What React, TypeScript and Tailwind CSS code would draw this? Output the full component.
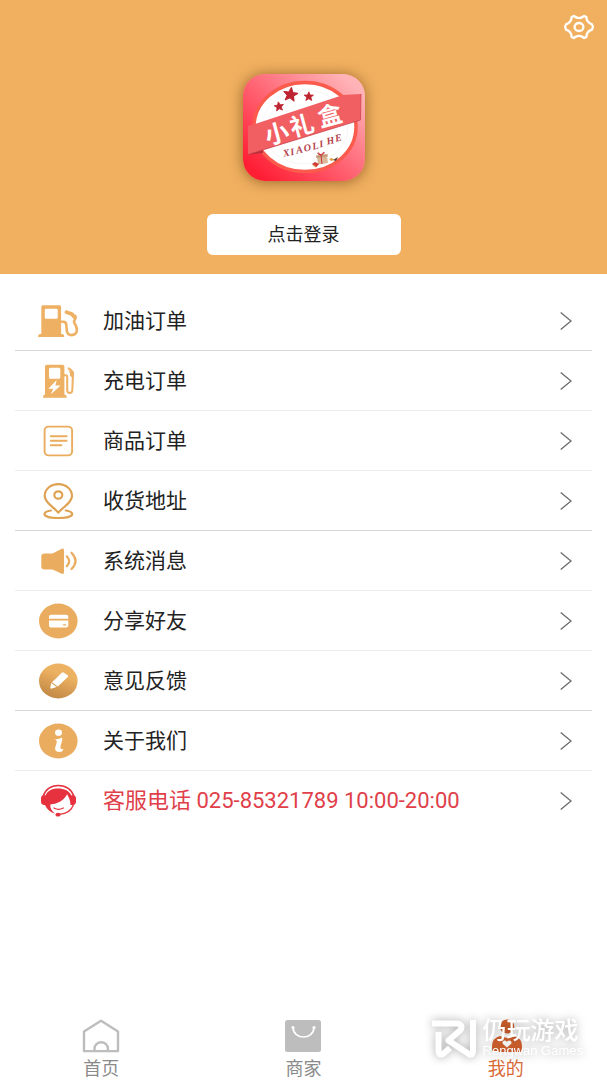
import type { ReactNode } from 'react';

interface MenuItem {
  label: string;
  icon: ReactNode;
  highlight?: boolean;
  strongLine?: boolean;
}

interface TabItem {
  label: string;
  icon: ReactNode;
  active?: boolean;
}

const ORANGE = '#eaac5e';

function MenuIcon({ children }: { children: ReactNode }) {
  return (
    <svg viewBox="0 0 42 38" className="h-[38px] w-[42px] shrink-0" fill="none" aria-hidden="true">
      {children}
    </svg>
  );
}

function FuelIcon() {
  return (
    <MenuIcon>
      <path
        fill="#eeb062"
        fillRule="evenodd"
        d="M6 3.300h16.500a1.600 1.600 0 0 1 1.600 1.600V32h1.600q1.600.4 1.600 3H1q0-2.600 1.700-3h1.600V4.900A1.600 1.600 0 0 1 6 3.300ZM9 6.700q-1.200 0-1.200 1.200v7.700q0 1.200 1.200 1.200h10.500q1.200 0 1.200-1.200V7.900q0-1.200-1.200-1.200Z"
      />
      <path
        stroke="#eeb062"
        strokeWidth="2.600"
        strokeLinecap="round"
        d="M24 19.800h2.500q2.500 0 2.800 3l.5 6q.6 4.300 5 4.300 5.500-.5 5-6-.3-3-2.600-6.300-.6-1.800.8-3.600.9-1.500.4-3"
      />
      <path
        stroke="#eeb062"
        strokeWidth="3.800"
        strokeLinecap="round"
        strokeLinejoin="round"
        d="M29.500 10.300l5.300 1.700 2.800 3.200"
      />
    </MenuIcon>
  );
}

function ChargeIcon() {
  return (
    <MenuIcon>
      <path
        fill="#eeb062"
        fillRule="evenodd"
        d="M10 2.700h15.600a1.800 1.800 0 0 1 1.800 1.800v28.300h1q1.300.2 1.300 2.900H6q0-2.700 1.400-2.900H8V4.500a1.800 1.800 0 0 1 2-1.800ZM13.500 5.700q-1.500 0-1.500 1.500v8q0 1.500 1.500 1.500h8.300q1.500 0 1.500-1.500v-8q0-1.500-1.500-1.500ZM19.700 18l-8.400 8.800h4.900L14 32.300l9.600-8.800h-5.200Z"
      />
      <path
        stroke="#eeb062"
        strokeWidth="2"
        strokeLinecap="round"
        d="M27.300 13.200h1.400q1.500 0 1.500 1.600v13.500q0 2.700 2.500 2.700t2.600-2.700l.7-17.300q-.4-2.200-4.400-4.700"
      />
      <path fill="#eeb062" d="M31.300 8.600l2 .6 3.200 1.800-.3 5-3.300-2.200.2-2.600Z" />
    </MenuIcon>
  );
}

function OrderIcon() {
  return (
    <MenuIcon>
      <rect x="7.600" y="4.600" width="27.500" height="28.800" rx="4" stroke={ORANGE} strokeWidth="1.900" />
      <path stroke={ORANGE} strokeWidth="1.900" strokeLinecap="round" d="M13.800 14.300h15.800M13.800 18.800h15.800M13.800 23.200h10.600" />
    </MenuIcon>
  );
}

function AddressIcon() {
  return (
    <MenuIcon>
      <path
        stroke="#dfa252"
        strokeWidth="2.200"
        strokeLinejoin="round"
        d="M21.300 30.600C16.500 25 7.700 20.600 7.700 14 7.700 7 13.800 2.200 21.300 2.200S35 7 35 14c0 6.600-8.800 11-13.700 16.600Z"
      />
      <ellipse cx="21.300" cy="13" rx="4" ry="3.700" stroke="#dfa252" strokeWidth="2.200" />
      <path
        stroke="#dfa252"
        strokeWidth="2.200"
        strokeLinecap="round"
        d="M14 28.500c-4 .6-6.500 1.800-6.500 3.500 0 2.500 6.400 4 13.800 4s13.900-1.500 13.900-4c0-1.700-2.500-2.900-6.500-3.500"
      />
    </MenuIcon>
  );
}

function MessageIcon() {
  return (
    <MenuIcon>
      <path
        fill={ORANGE}
        d="M7.500 11.400h8L24.800 6.700q2.200-.7 2.200 1.500v22q0 2.300-2.200 1.600L15.500 27.500h-8q-3.200 0-3.200-3V14.400q0-3 3.200-3Z"
      />
      <path stroke={ORANGE} strokeWidth="2.200" strokeLinecap="round" d="M29.800 14.300q4.800 4.900 0 10M34.500 10.700q8 8.300 0 16.300" />
    </MenuIcon>
  );
}

function ShareIcon() {
  return (
    <MenuIcon>
      <ellipse cx="21.300" cy="19" rx="19.300" ry="17.400" fill={ORANGE} />
      <path fill="#fff" d="M14 12.700h15.300q2 0 2 2v2H12v-2q0-2 2-2ZM12 18.600h19.300v4.800q0 2-2 2H14q-2 0-2-2Z" />
      <path stroke={ORANGE} strokeWidth="1.400" strokeLinecap="round" d="M26.500 22.900h2.200" />
    </MenuIcon>
  );
}

function FeedbackIcon() {
  return (
    <MenuIcon>
      <defs>
        <linearGradient id="feedback-fill" x1="0.7" y1="0" x2="0.3" y2="1">
          <stop offset="0.3" stopColor="#edb162" />
          <stop offset="1" stopColor="#c08744" />
        </linearGradient>
      </defs>
      <ellipse cx="21.300" cy="19" rx="19.300" ry="17.400" fill="url(#feedback-fill)" />
      <path fill="#fff" d="M24.800 10.700q1-.8 2.200 0l3.700 2.500q1 .8.100 1.700l-10 9.500-5.800-4.200ZM14.200 21l5.500 4.100-5 1.500q-1.600.3-1.400-1.100Z" />
    </MenuIcon>
  );
}

function AboutIcon() {
  return (
    <MenuIcon>
      <ellipse cx="21.300" cy="19" rx="19.300" ry="17.400" fill={ORANGE} />
      <ellipse cx="21.500" cy="10.700" rx="3.500" ry="3.100" fill="#fff" />
      <path
        fill="#fff"
        d="M17.400 17q3.800.6 7.800-1.500.4 2.300-.7 5.300-1.300 3.400-1 5.200.6 1.500 2.900 1.200-.6 2.700-3.800 2.800-4.900-.2-4.500-3.700.1-1.800 1.300-4.300.9-3-.2-3.900-.9-.5-1.800-1.100Z"
      />
    </MenuIcon>
  );
}

function ServiceIcon() {
  return (
    <MenuIcon>
      <path stroke="#e5323e" strokeWidth="1.500" d="M6 14.500C8.500 7 14 3.400 21.300 3.400S34.500 7 37 14.500" />
      <path
        fill="#e5323e"
        d="M8.600 13.200C11 8.500 15.500 6.600 21.300 6.600s10.600 2 12.900 6.600h1.600q3 0 3.200 3v3.600q0 3-3.200 3.200h-2.300c-.3-5-1.700-7.800-3.400-10.700-3.500 6.300-8.800 9.500-16.800 10.200-.4 3.300 1.500 6.700 4.900 9.300-4.700-1.500-8.400-4.500-10.200-8.800h-.8Q4 22.800 4 19.800v-3.600q0-3 3-3Z"
      />
      <path stroke="#e5323e" strokeWidth="1.300" strokeLinecap="round" d="M36.300 23c-1.700 5.300-6.300 8.700-14 9.300M17 26q4.600 2.600 9.300 0" />
      <ellipse cx="21" cy="32.700" rx="2.600" ry="1.900" fill="#e5323e" />
    </MenuIcon>
  );
}

function AppLogo() {
  const star = 'M0-6 1.700-2 6-1.800 2.700 1 3.800 5.200 0 2.900-3.800 5.200-2.700 1-6-1.800-1.700-2Z';
  return (
    <svg
      viewBox="0 0 122 107"
      className="h-[107px] w-[122px] rounded-[22px] shadow-[0_1px_14px_rgba(90,50,10,0.6)]"
      role="img"
      aria-label="小礼盒"
    >
      <defs>
        <linearGradient id="logo-fill" x1="0.1" y1="0.9" x2="0.9" y2="0.1">
          <stop offset="0" stopColor="#ff1f35" />
          <stop offset="0.5" stopColor="#ff6675" />
          <stop offset="1" stopColor="#ffb3b7" />
        </linearGradient>
      </defs>
      <rect width="122" height="107" fill="url(#logo-fill)" />
      <ellipse cx="62" cy="53" rx="51" ry="44.500" fill="#fff" stroke="#fb5b4c" strokeWidth="3.500" />
      <ellipse cx="62" cy="53" rx="43" ry="37" fill="none" stroke="#f3f3f3" strokeWidth="0.800" />
      <g fill="#bd2431" stroke="#bd2431" strokeLinejoin="round">
        <path d={star} transform="translate(47.500 20.500) rotate(8) scale(1.150)" />
        <path d={star} transform="translate(65.800 22.500) scale(.78)" />
        <path d={star} transform="translate(36 32.500) rotate(-8) scale(.78)" />
      </g>
      <path fill="#b9303a" d="M5 80.500l15-5v3.500Z" />
      <path fill="#f15f63" d="M5 52l7-2L100 21l18-1-.500 26L5 80.500Z" />
      <path fill="none" stroke="#c33f49" strokeWidth="0.700" d="M118 20l-.500 26L5 80.500" />
      <g
        fill="#fff"
        fontSize="24"
        fontWeight="700"
        textAnchor="middle"
        fontFamily="'Noto Sans CJK SC', sans-serif"
      >
        <text transform="translate(36 68) rotate(-15)">小</text>
        <text transform="translate(61 60) rotate(-15)">礼</text>
        <text transform="translate(89 50) rotate(-15)">盒</text>
      </g>
      <g
        fill="#b5414a"
        fontSize="10"
        textAnchor="middle"
        fontFamily="'Liberation Serif', serif"
        fontStyle="italic"
        fontWeight="700"
      >
        <text transform="translate(44 82) rotate(-12)">X</text>
        <text transform="translate(50 81) rotate(-12)">I</text>
        <text transform="translate(57 79) rotate(-12)">A</text>
        <text transform="translate(65 77) rotate(-12)">O</text>
        <text transform="translate(73 75) rotate(-12)">L</text>
        <text transform="translate(79 73) rotate(-12)">I</text>
        <text transform="translate(88 70) rotate(-12)">H</text>
        <text transform="translate(96 67) rotate(-12)">E</text>
      </g>
      <path fill="#d9b898" d="M74 83l10-1 1 7-10 1.500Z" />
      <path fill="#c59a78" d="M73 81.500l11.500-1.500.3 2.500-11.500 1.500Z" />
      <path stroke="#c9363c" strokeWidth="1" fill="none" d="M79 90l-1-9q-4-4-3-1l3 1q3-4 3.500-2l-3 2" />
      <path fill="#d33a35" d="M69 90l3-2 4 2-3 3.500Z" />
      <path fill="#dd9c3d" d="M86 85l3-1 2 2-3 1ZM70 92l2-1 1 2Z" />
      <path fill="#5b3429" d="M90 86l5-3-2 4Z" />
    </svg>
  );
}

function GearIcon() {
  return (
    <svg viewBox="0 0 30 26" className="h-[26px] w-[30px]" fill="none" stroke="#fff" strokeWidth="2.300" aria-hidden="true">
      <path
        strokeLinejoin="round"
        d="M7.600 3 9.800 2Q15 6.200 20.200 2L22.400 3Q22.400 8.400 28 10.300L28.900 13 28 15.700Q22.400 17.600 22.400 23L20.200 24Q15 19.800 9.800 24L7.600 23Q7.600 17.600 2 15.700L1.100 13 2 10.300Q7.600 8.400 7.600 3Z"
      />
      <ellipse cx="15" cy="13" rx="4.400" ry="4" />
    </svg>
  );
}

function Chevron() {
  return (
    <svg viewBox="0 0 12 18" className="h-[18px] w-3 shrink-0" fill="none" stroke="#6b6b6b" strokeWidth="1.300" aria-hidden="true">
      <path d="M.7.600 11 9 .7 17.400" />
    </svg>
  );
}

function TabIcon({ children }: { children: ReactNode }) {
  return (
    <svg viewBox="0 0 38 34" className="h-[34px] w-[38px]" fill="none" aria-hidden="true">
      {children}
    </svg>
  );
}

function Watermark() {
  return (
    <div className="pointer-events-none absolute right-6 bottom-[21px] flex items-center gap-1.5 text-white drop-shadow-[0_0_5px_rgba(0,0,0,0.35)]">
      <svg viewBox="0 0 46 40" className="h-10 w-[46px]" fill="none" stroke="currentColor" strokeLinejoin="round" aria-hidden="true">
        <path strokeWidth="6" d="M1 4.500h25q6.500 1 3.500 6.500L17.500 21.500 40 36.500" />
        <path strokeWidth="6" d="M7.500 13v19q0 5 4.500 3l7-6M42 1v31q0 5-4 3" />
      </svg>
      <div className="flex flex-col items-start">
        <span className="text-[24px] leading-6 font-medium">仍玩游戏</span>
        <span className="font-['Liberation_Sans',sans-serif] text-[13px] leading-4">Rengwan Games</span>
      </div>
    </div>
  );
}

const menu: MenuItem[] = [
  { label: '加油订单', icon: <FuelIcon />, strongLine: true },
  { label: '充电订单', icon: <ChargeIcon /> },
  { label: '商品订单', icon: <OrderIcon /> },
  { label: '收货地址', icon: <AddressIcon />, strongLine: true },
  { label: '系统消息', icon: <MessageIcon /> },
  { label: '分享好友', icon: <ShareIcon /> },
  { label: '意见反馈', icon: <FeedbackIcon />, strongLine: true },
  { label: '关于我们', icon: <AboutIcon /> },
  { label: '客服电话 025-85321789 10:00-20:00', icon: <ServiceIcon />, highlight: true },
];

const tabs: TabItem[] = [
  {
    label: '首页',
    icon: (
      <TabIcon>
        <path stroke="#bdbdbd" strokeWidth="2.400" strokeLinejoin="round" d="M19 1.800 36 12.500v19.600H2V12.500ZM12.500 32v-2.500a6.700 6.200 0 0 1 13.400 0V32" />
      </TabIcon>
    ),
  },
  {
    label: '商家',
    icon: (
      <TabIcon>
        <rect x="1" y="1" width="36" height="32" rx="2.500" fill="#bdbdbd" />
        <path stroke="#fff" strokeWidth="1.600" d="M9 8.600c.5 12.500 20.500 12.500 21 0" />
        <circle cx="9" cy="8.500" r="1.600" fill="#fff" />
        <circle cx="30" cy="8.500" r="1.600" fill="#fff" />
      </TabIcon>
    ),
  },
  {
    label: '我的',
    active: true,
    icon: (
      <TabIcon>
        <ellipse cx="20" cy="7.500" rx="7.300" ry="7" fill="#d4622e" />
        <path fill="#d4622e" d="M13 17q7 3.500 14 0 8 2 8 10.500V31q0 2-2 2H7q-2 0-2-2v-3.500Q5 19 13 17Z" />
        <path fill="#fff" d="M20 28.500l-4-3.600q-1.200-1.800.3-3 1.900-1.100 3.700.9 1.800-2 3.700-.9 1.500 1.200.3 3Z" />
      </TabIcon>
    ),
  },
];

export default function App() {
  return (
    <div className="relative flex min-h-screen flex-col bg-white font-[Roboto,'Noto_Sans_CJK_SC',sans-serif]">
      <header className="flex flex-col items-center bg-[#f1b060] px-[13px] pt-3.5 pb-[19px]">
        <button type="button" aria-label="设置" className="self-end">
          <GearIcon />
        </button>
        <div className="mt-[34px]">
          <AppLogo />
        </div>
        <button
          type="button"
          className="mt-[33px] h-[41px] w-[194px] rounded-md bg-white text-[18px] text-[#222]"
        >
          点击登录
        </button>
      </header>

      <ul className="px-[15px] pt-[17px]">
        {menu.map((item) => (
          <li
            key={item.label}
            className={`border-b last:border-b-0 ${item.strongLine ? 'border-[#d6d6d6]' : 'border-[#ececec]'}`}
          >
            <a
              href="#"
              className={`flex h-[59px] items-center gap-6 pr-5 pl-[22px] leading-7 ${
                item.highlight ? 'text-[22px] text-[#e0404a]' : 'text-[21px] text-[#222]'
              }`}
            >
              {item.icon}
              <span className="flex-1">{item.label}</span>
              <Chevron />
            </a>
          </li>
        ))}
      </ul>

      <nav className="mt-auto grid grid-cols-3 pb-px">
        {tabs.map((tab) => (
          <a
            key={tab.label}
            href="#"
            className={`flex flex-col items-center gap-1.5 text-[18px] leading-5 ${
              tab.active ? 'text-[#d96a35]' : 'text-[#8a8a8a]'
            }`}
          >
            {tab.icon}
            <span>{tab.label}</span>
          </a>
        ))}
      </nav>

      <Watermark />
    </div>
  );
}
